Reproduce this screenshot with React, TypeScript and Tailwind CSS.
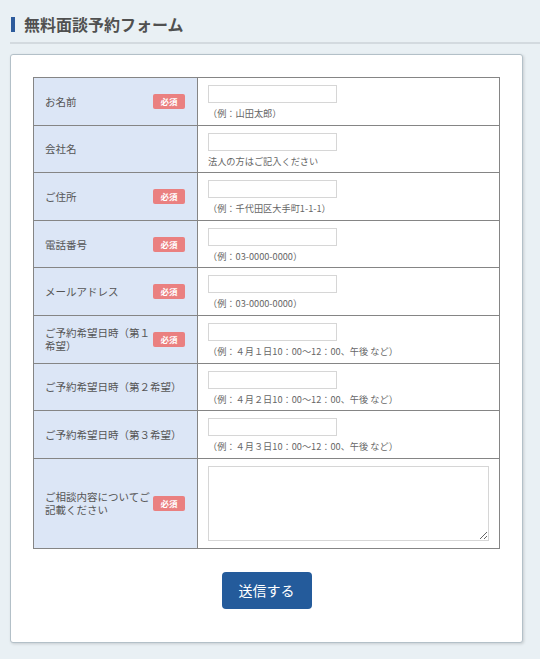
const rows: { label: string; required?: boolean; hint: string }[] = [
  { label: "お名前", required: true, hint: "（例：山田太郎）" },
  { label: "会社名", hint: "法人の方はご記入ください" },
  { label: "ご住所", required: true, hint: "（例：千代田区大手町1-1-1）" },
  { label: "電話番号", required: true, hint: "（例：03-0000-0000）" },
  { label: "メールアドレス", required: true, hint: "（例：03-0000-0000）" },
  { label: "ご予約希望日時（第１希望）", required: true, hint: "（例：４月１日10：00〜12：00、午後 など）" },
  { label: "ご予約希望日時（第２希望）", hint: "（例：４月２日10：00〜12：00、午後 など）" },
  { label: "ご予約希望日時（第３希望）", hint: "（例：４月３日10：00〜12：00、午後 など）" },
]

function Badge() {
  return (
    <span className="ml-[2px] flex h-[15px] w-[32px] shrink-0 items-center justify-center rounded-[2px] bg-[#ea8080] text-[8.5px] font-bold text-white">
      必須
    </span>
  )
}

function LabelCell({ label, required }: { label: string; required?: boolean }) {
  return (
    <td className="w-[164px] border border-[#858585] bg-[#dce6f6] pl-[11px] pr-[12px] align-middle">
      <div className="flex items-center">
        <span className="flex-1 text-[10.5px] leading-[13px] text-[#555]">{label}</span>
        {required && <Badge />}
      </div>
    </td>
  )
}

export default function App() {
  return (
    <div
      className="min-h-[659px] w-[540px] bg-[#e9f0f4] pl-[10px]"
      style={{ fontFamily: '"Noto Sans CJK JP", "Noto Sans", sans-serif' }}
    >
      <div className="flex items-center gap-[9px] pl-[1px] pt-[15px] pb-[9px]">
        <span className="h-[15px] w-[4px] bg-[#2d5b9c]" />
        <h1 className="text-[16px] font-bold leading-[18px] text-[#505050]">無料面談予約フォーム</h1>
      </div>
      <div className="h-[2px] bg-[#d3dadf]" />
      <div className="mt-[10px] w-[513px] rounded-[3px] border border-[#b3c0c8] bg-white px-[22px] pt-[22px] pb-[33px] shadow-[1px_1px_3px_rgba(0,0,0,0.15)]">
        <table className="w-full border-collapse">
          <tbody>
            {rows.map((r) => (
              <tr key={r.label} className="h-[47.6px]">
                <LabelCell label={r.label} required={r.required} />
                <td className="border border-[#858585] pl-[10px] pt-[7px] pb-[4px] align-top">
                  <input
                    type="text"
                    className="block h-[18px] w-[129px] border border-[#d6d6d6] bg-white outline-none"
                  />
                  <p className="mt-[4px] text-[9.2px] leading-[13px] text-[#666]">{r.hint}</p>
                </td>
              </tr>
            ))}
            <tr className="h-[90px]">
              <LabelCell label="ご相談内容についてご記載ください" required />
              <td className="border border-[#858585] pl-[10px] pt-[7px] pb-[7px] align-top">
                <textarea className="block h-[75px] w-[281px] resize border border-[#d6d6d6] bg-white outline-none" />
              </td>
            </tr>
          </tbody>
        </table>
        <div className="mt-[23px] flex justify-center">
          <button className="h-[37px] w-[90px] rounded-[4px] bg-[#245b9b] text-[14px] text-white">送信する</button>
        </div>
      </div>
    </div>
  )
}
